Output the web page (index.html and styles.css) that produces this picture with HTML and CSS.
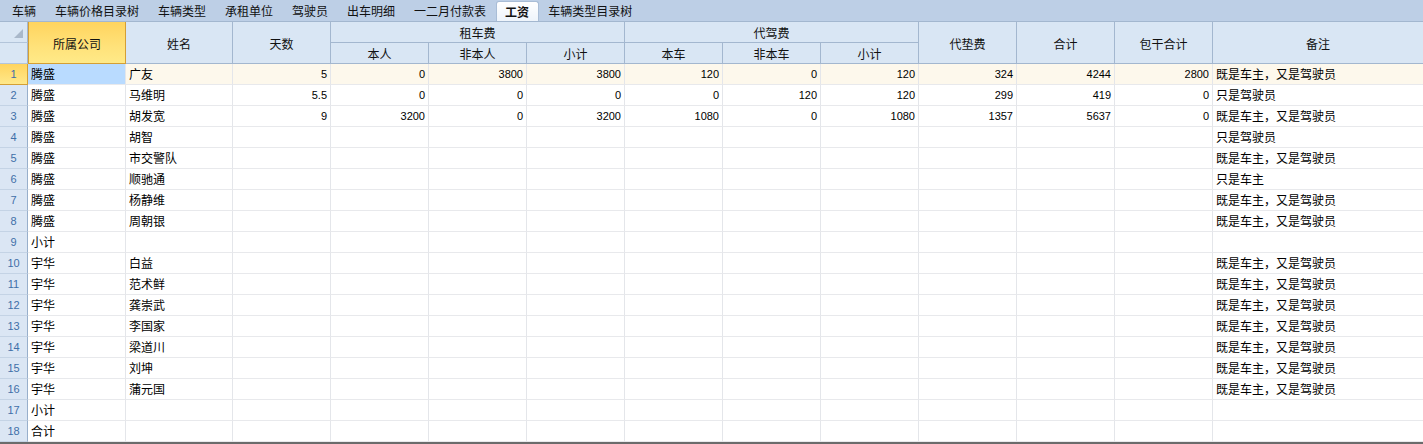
FILE: index.html
```html
<!DOCTYPE html>
<html lang="zh">
<head>
<meta charset="utf-8">
<title>工资</title>
<link rel="stylesheet" href="styles.css">
</head>
<body>
<div class="app">
  <div class="tabs">
    <div class="tab">车辆</div>
    <div class="tab">车辆价格目录树</div>
    <div class="tab">车辆类型</div>
    <div class="tab">承租单位</div>
    <div class="tab">驾驶员</div>
    <div class="tab">出车明细</div>
    <div class="tab">一二月付款表</div>
    <div class="tab active">工资</div>
    <div class="tab">车辆类型目录树</div>
  </div>
  <div class="sheet">
    <div class="head">
      <div class="h corner top"><span class="tri"></span></div>
      <div class="h span2 sel">所属公司</div>
      <div class="h span2">姓名</div>
      <div class="h span2">天数</div>
      <div class="h group">租车费</div>
      <div class="h group">代驾费</div>
      <div class="h span2">代垫费</div>
      <div class="h span2">合计</div>
      <div class="h span2">包干合计</div>
      <div class="h span2 last">备注</div>
      <div class="h corner"></div>
      <div class="h">本人</div>
      <div class="h">非本人</div>
      <div class="h">小计</div>
      <div class="h">本车</div>
      <div class="h">非本车</div>
      <div class="h">小计</div>
    </div>
    <div class="body">
      <div class="row current">
        <div class="c rn">1</div><div class="c selcell">腾盛</div><div class="c">广友</div>
        <div class="c n">5</div><div class="c n">0</div><div class="c n">3800</div><div class="c n">3800</div>
        <div class="c n">120</div><div class="c n">0</div><div class="c n">120</div><div class="c n">324</div>
        <div class="c n">4244</div><div class="c n">2800</div><div class="c">既是车主，又是驾驶员</div>
      </div>
      <div class="row">
        <div class="c rn">2</div><div class="c">腾盛</div><div class="c">马维明</div>
        <div class="c n">5.5</div><div class="c n">0</div><div class="c n">0</div><div class="c n">0</div>
        <div class="c n">0</div><div class="c n">120</div><div class="c n">120</div><div class="c n">299</div>
        <div class="c n">419</div><div class="c n">0</div><div class="c">只是驾驶员</div>
      </div>
      <div class="row">
        <div class="c rn">3</div><div class="c">腾盛</div><div class="c">胡发宽</div>
        <div class="c n">9</div><div class="c n">3200</div><div class="c n">0</div><div class="c n">3200</div>
        <div class="c n">1080</div><div class="c n">0</div><div class="c n">1080</div><div class="c n">1357</div>
        <div class="c n">5637</div><div class="c n">0</div><div class="c">既是车主，又是驾驶员</div>
      </div>
      <div class="row">
        <div class="c rn">4</div><div class="c">腾盛</div><div class="c">胡智</div>
        <div class="c"></div><div class="c"></div><div class="c"></div><div class="c"></div><div class="c"></div><div class="c"></div><div class="c"></div><div class="c"></div><div class="c"></div><div class="c"></div>
        <div class="c">只是驾驶员</div>
      </div>
      <div class="row">
        <div class="c rn">5</div><div class="c">腾盛</div><div class="c">市交警队</div>
        <div class="c"></div><div class="c"></div><div class="c"></div><div class="c"></div><div class="c"></div><div class="c"></div><div class="c"></div><div class="c"></div><div class="c"></div><div class="c"></div>
        <div class="c">既是车主，又是驾驶员</div>
      </div>
      <div class="row">
        <div class="c rn">6</div><div class="c">腾盛</div><div class="c">顺驰通</div>
        <div class="c"></div><div class="c"></div><div class="c"></div><div class="c"></div><div class="c"></div><div class="c"></div><div class="c"></div><div class="c"></div><div class="c"></div><div class="c"></div>
        <div class="c">只是车主</div>
      </div>
      <div class="row">
        <div class="c rn">7</div><div class="c">腾盛</div><div class="c">杨静维</div>
        <div class="c"></div><div class="c"></div><div class="c"></div><div class="c"></div><div class="c"></div><div class="c"></div><div class="c"></div><div class="c"></div><div class="c"></div><div class="c"></div>
        <div class="c">既是车主，又是驾驶员</div>
      </div>
      <div class="row">
        <div class="c rn">8</div><div class="c">腾盛</div><div class="c">周朝银</div>
        <div class="c"></div><div class="c"></div><div class="c"></div><div class="c"></div><div class="c"></div><div class="c"></div><div class="c"></div><div class="c"></div><div class="c"></div><div class="c"></div>
        <div class="c">既是车主，又是驾驶员</div>
      </div>
      <div class="row">
        <div class="c rn">9</div><div class="c">小计</div><div class="c"></div>
        <div class="c"></div><div class="c"></div><div class="c"></div><div class="c"></div><div class="c"></div><div class="c"></div><div class="c"></div><div class="c"></div><div class="c"></div><div class="c"></div>
        <div class="c"></div>
      </div>
      <div class="row">
        <div class="c rn">10</div><div class="c">宇华</div><div class="c">白益</div>
        <div class="c"></div><div class="c"></div><div class="c"></div><div class="c"></div><div class="c"></div><div class="c"></div><div class="c"></div><div class="c"></div><div class="c"></div><div class="c"></div>
        <div class="c">既是车主，又是驾驶员</div>
      </div>
      <div class="row">
        <div class="c rn">11</div><div class="c">宇华</div><div class="c">范术鲜</div>
        <div class="c"></div><div class="c"></div><div class="c"></div><div class="c"></div><div class="c"></div><div class="c"></div><div class="c"></div><div class="c"></div><div class="c"></div><div class="c"></div>
        <div class="c">既是车主，又是驾驶员</div>
      </div>
      <div class="row">
        <div class="c rn">12</div><div class="c">宇华</div><div class="c">龚崇武</div>
        <div class="c"></div><div class="c"></div><div class="c"></div><div class="c"></div><div class="c"></div><div class="c"></div><div class="c"></div><div class="c"></div><div class="c"></div><div class="c"></div>
        <div class="c">既是车主，又是驾驶员</div>
      </div>
      <div class="row">
        <div class="c rn">13</div><div class="c">宇华</div><div class="c">李国家</div>
        <div class="c"></div><div class="c"></div><div class="c"></div><div class="c"></div><div class="c"></div><div class="c"></div><div class="c"></div><div class="c"></div><div class="c"></div><div class="c"></div>
        <div class="c">既是车主，又是驾驶员</div>
      </div>
      <div class="row">
        <div class="c rn">14</div><div class="c">宇华</div><div class="c">梁道川</div>
        <div class="c"></div><div class="c"></div><div class="c"></div><div class="c"></div><div class="c"></div><div class="c"></div><div class="c"></div><div class="c"></div><div class="c"></div><div class="c"></div>
        <div class="c">既是车主，又是驾驶员</div>
      </div>
      <div class="row">
        <div class="c rn">15</div><div class="c">宇华</div><div class="c">刘坤</div>
        <div class="c"></div><div class="c"></div><div class="c"></div><div class="c"></div><div class="c"></div><div class="c"></div><div class="c"></div><div class="c"></div><div class="c"></div><div class="c"></div>
        <div class="c">既是车主，又是驾驶员</div>
      </div>
      <div class="row">
        <div class="c rn">16</div><div class="c">宇华</div><div class="c">蒲元国</div>
        <div class="c"></div><div class="c"></div><div class="c"></div><div class="c"></div><div class="c"></div><div class="c"></div><div class="c"></div><div class="c"></div><div class="c"></div><div class="c"></div>
        <div class="c">既是车主，又是驾驶员</div>
      </div>
      <div class="row">
        <div class="c rn">17</div><div class="c">小计</div><div class="c"></div>
        <div class="c"></div><div class="c"></div><div class="c"></div><div class="c"></div><div class="c"></div><div class="c"></div><div class="c"></div><div class="c"></div><div class="c"></div><div class="c"></div>
        <div class="c"></div>
      </div>
      <div class="row">
        <div class="c rn">18</div><div class="c">合计</div><div class="c"></div>
        <div class="c"></div><div class="c"></div><div class="c"></div><div class="c"></div><div class="c"></div><div class="c"></div><div class="c"></div><div class="c"></div><div class="c"></div><div class="c"></div>
        <div class="c"></div>
      </div>
    </div>
  </div>
</div>
</body>
</html>
```
FILE: styles.css
```css
* { box-sizing: border-box; }
html, body { margin: 0; padding: 0; background: #ffffff; }
body {
  font-family: "Liberation Sans", "Noto Sans CJK SC", sans-serif;
  font-size: 12px;
  color: #000;
  width: 1423px;
  height: 444px;
  overflow: hidden;
}
.app { display: flex; flex-direction: column; width: 1423px; height: 444px; }

.tabs {
  display: flex;
  align-items: flex-end;
  height: 22px;
  padding-left: 2.5px;
  background: #bdcfe6;
}
.tab {
  height: 20px;
  line-height: 20px;
  padding: 0 9.5px;
  font-family: "Noto Sans CJK SC", sans-serif;
  font-size: 12px;
  color: #111;
  white-space: nowrap;
}
.tab.active {
  background: linear-gradient(#ffffff, #eef4fb);
  border: 1px solid #a9bdd6;
  border-bottom: none;
  border-radius: 3px 3px 0 0;
  font-weight: bold;
  line-height: 19px;
  padding: 0 8.5px;
}

.sheet {
  --cols: 28px 98px 107px repeat(10, 98px) 210px;
  display: flex;
  flex-direction: column;
  flex: 1;
  border-bottom: 2px solid #6b6b6b;
}
.head {
  display: grid;
  grid-template-columns: var(--cols);
  grid-template-rows: 21px 21px;
  border-top: 1px solid #a3b7cf;
  background: #d9e6f4;
}
.h {
  display: flex;
  align-items: center;
  justify-content: center;
  border-right: 1px solid #a3b7cf;
  border-bottom: 1px solid #a3b7cf;
  font-family: "Noto Sans CJK SC", sans-serif;
  font-size: 12px;
  color: #111;
  padding-top: 1px;
}
.h.span2 { grid-row: span 2; }
.h.group { grid-column: span 3; }
.h.last { border-right: none; }
.h.corner { background: #d9e6f4; border-bottom-color: #b3c5da; }
.h.corner.top { justify-content: flex-end; align-items: flex-end; padding: 0 4px 4px 0; }
.tri {
  width: 0; height: 0;
  border-left: 9px solid transparent;
  border-bottom: 9px solid #a9b8ca;
}
.h.sel {
  background: linear-gradient(#ffd45e, #ffe27a 60%, #ffea88);
  border: 1px solid #d49f35;
  border-top: none;
}

.body { display: flex; flex-direction: column; }
.row {
  display: grid;
  grid-template-columns: var(--cols);
  height: 21px;
}
.c {
  border-right: 1px solid #e4e6ea;
  border-bottom: 1px solid #e8e9ec;
  line-height: 20px;
  padding: 0 3px;
  white-space: nowrap;
  overflow: hidden;
  font-family: "Noto Sans CJK SC", sans-serif;
  font-size: 12px;
}
.c:last-child { border-right: none; }
.c.n {
  text-align: right;
  font-family: "Liberation Sans", sans-serif;
  font-size: 11px;
  padding-right: 3px;
}
.c.rn {
  background: #dbe6f4;
  color: #3f6fa8;
  text-align: center;
  font-family: "Liberation Sans", sans-serif;
  font-size: 11px;
  border-right: 1px solid #98afcb;
  border-bottom: 1px solid #c4d3e5;
  padding: 0;
}
.row.current .c { background: #fdf8ec; }
.row.current .c.rn {
  background: linear-gradient(#ffd45e, #ffe88a);
  color: #3f6fa8;
  border-right: 1px solid #d49f35;
  border-bottom: 1px solid #d49f35;
}
.row.current .c.selcell { background: #b9dbff; }
```
